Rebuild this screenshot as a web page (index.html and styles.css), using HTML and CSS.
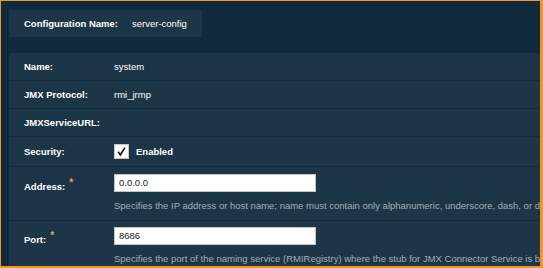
FILE: index.html
```html
<!DOCTYPE html>
<html lang="en">
<head>
    <meta charset="UTF-8" />
    <title>JMX Connector</title>
    <link rel="stylesheet" href="styles.css">
</head>
<body>
    <div class="frame">
        <div class="config-name">
            <span class="config-label">Configuration Name:</span>
            <span class="config-value">server-config</span>
        </div>

        <div class="props">
            <div class="row">
                <div class="label">Name:</div>
                <div class="value">system</div>
            </div>
            <div class="row">
                <div class="label">JMX Protocol:</div>
                <div class="value">rmi_jrmp</div>
            </div>
            <div class="row">
                <div class="label">JMXServiceURL:</div>
                <div class="value"></div>
            </div>
            <div class="row row-check">
                <div class="label">Security:</div>
                <div class="value check-line">
                    <span class="checkbox">
                        <svg width="11" height="11" viewBox="0 0 11 11"><path d="M2.2 5.8 L4.3 8.9 L8.9 1.6" fill="none" stroke="#111" stroke-width="1.7"/></svg>
                    </span>
                    <span class="check-text">Enabled</span>
                </div>
            </div>
            <div class="row row-field">
                <div class="label">Address:<span class="req">*</span></div>
                <div class="value">
                    <div class="text-input">0.0.0.0</div>
                    <div class="help">Specifies the IP address or host name; name must contain only alphanumeric, underscore, dash, or dot characters.</div>
                </div>
            </div>
            <div class="row row-field row-last">
                <div class="label">Port:<span class="req">*</span></div>
                <div class="value">
                    <div class="text-input">8686</div>
                    <div class="help">Specifies the port of the naming service (RMIRegistry) where the stub for JMX Connector Service is bound.</div>
                </div>
            </div>
        </div>
    </div>
</body>
</html>
```

FILE: styles.css
```css
:root {
    --frame-orange: #ee962e;
    --bg-dark: #102b3d;
    --panel: #1c3547;
    --separator: #122c3d;
    --help-grey: #a3adb5;
    --font-family: 'Liberation Sans', Arial, Helvetica, sans-serif;
}

html, body {
    margin: 0;
    padding: 0;
    background: var(--bg-dark);
    font-family: var(--font-family);
    font-size: 9.5px;
    color: #fff;
}

.frame {
    width: 543px;
    height: 268px;
    box-sizing: border-box;
    border: 1px solid var(--frame-orange);
    border-right-width: 3px;
    border-bottom-width: 2px;
    background: var(--bg-dark);
    padding: 9px 0 0 8px;
    overflow: hidden;
}

.config-name {
    width: 193px;
    height: 27px;
    background: var(--panel);
    display: flex;
    align-items: center;
    padding-left: 15px;
    box-sizing: border-box;
}

.config-label {
    font-weight: 700;
    width: 108px;
}

.props {
    margin-top: 16px;
    width: 760px;
    background: var(--panel);
}

.row {
    display: flex;
    align-items: flex-start;
    border-bottom: 1px solid var(--separator);
    min-height: 27px;
}

.row-last {
    border-bottom: none;
}

.label {
    width: 90px;
    padding-left: 15px;
    flex-shrink: 0;
    font-weight: 700;
    line-height: 27px;
}

.value {
    line-height: 27px;
    flex: 1;
}

.row-check {
    min-height: 29px;
}

.row-check .label {
    line-height: 29px;
}

.check-line {
    display: flex;
    align-items: center;
    height: 29px;
}

.checkbox {
    width: 15px;
    height: 15px;
    background: #fff;
    border: 1px solid #c8c8c8;
    box-sizing: border-box;
    display: flex;
    align-items: center;
    justify-content: center;
}

.check-text {
    font-weight: 700;
    margin-left: 7px;
}

.row-field .label {
    line-height: 18px;
    padding-top: 7px;
}

.row-field .value {
    padding-top: 7px;
    line-height: normal;
}

.row-last .label,
.row-last .value {
    padding-top: 6px;
}

.req {
    color: #f0a43c;
    font-size: 10px;
    vertical-align: 4px;
    margin-left: 4px;
}

.text-input {
    width: 202px;
    height: 18px;
    box-sizing: border-box;
    background: #fff;
    border: 1px solid #bfc5ca;
    color: #222;
    padding-left: 4px;
    line-height: 16px;
}

.help {
    color: var(--help-grey);
    white-space: nowrap;
    margin-top: 8px;
    padding-bottom: 9px;
}
```
